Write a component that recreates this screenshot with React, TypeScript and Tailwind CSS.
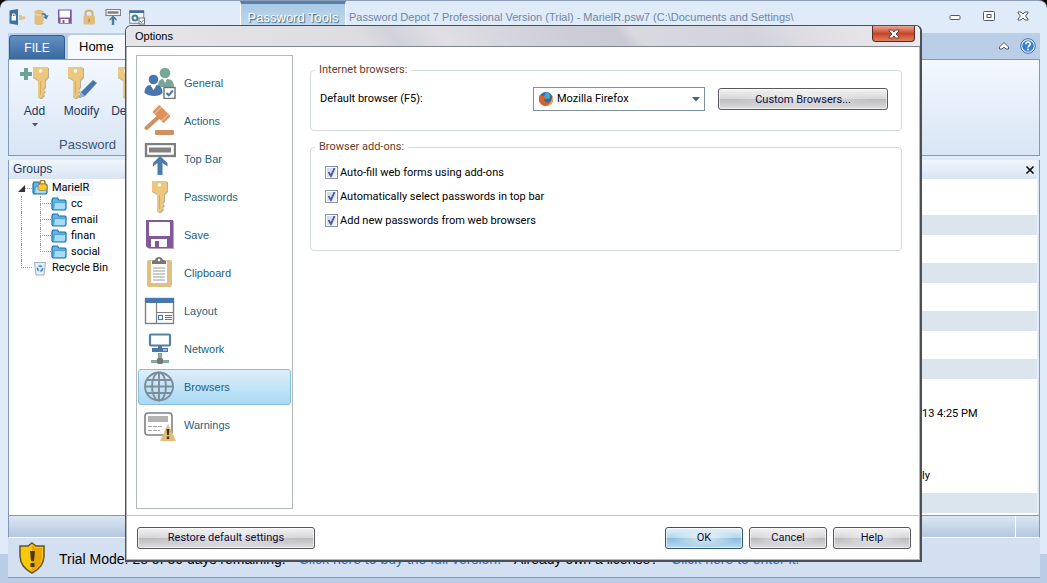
import { useState, type ReactNode } from "react";
import clsx from "clsx";

const LINE = "#808080";

function KeyShape() {
  return (
    <>
      <path d="M9 1h15v10l-3 3v7l-2 2 2 2-2 2 1 2-3 3h-2l-2-2V14l-5-3z" fill="#b9ae93" />
      <path d="M8 0h15v10l-3 3v7l-2 2 2 2-2 2 1 2-3 3h-1l-2-2V13l-5-3V0z" fill="#edc77e" />
      <circle cx="15.5" cy="4" r="1.8" fill="#fff" />
      <path d="M15.5 14v14" stroke="#d3aa60" />
    </>
  );
}

function GeneralIcon() {
  return (
    <>
      <circle cx="21" cy="6" r="5.3" fill="#79a797" />
      <path d="M14 20c0-6 2-8 5-8l2 4 2-4c5 0 7 3 7 8z" fill="#79a797" />
      <circle cx="9.5" cy="12.5" r="4.8" fill="#4977ad" />
      <path d="M0.5 26c0-5 2-8 6-8l3 5 3-5c4 0 6 3 6 8-3 4-13 4-18 0z" fill="#4977ad" />
      <path d="M7 18h5l-2.5 5z" fill="#fff" />
      <rect x="20" y="20.5" width="11" height="11" fill="#fff" stroke="#707070" strokeWidth="1.4" />
      <path d="M22.5 26l2.3 2.3 4-4.8" fill="none" stroke="#4977ad" strokeWidth="2" />
    </>
  );
}

function ActionsIcon() {
  return (
    <>
      <path d="M2.5 23L14 12.5" stroke="#cf8f60" strokeWidth="4" strokeLinecap="round" />
      <g transform="rotate(45 17.5 9)">
        <rect x="9.5" y="4" width="16" height="10" rx="1" fill="#de935a" />
        <path d="M12.5 4v10M22.5 4v10" stroke="#f3c49d" />
      </g>
      <rect x="11" y="25" width="19" height="5" rx="1" fill="#cf8f60" />
    </>
  );
}

function TopBarIcon() {
  return (
    <>
      <rect x="2" y="1" width="29" height="12" fill="#fff" stroke={LINE} strokeWidth="2.4" />
      <rect x="5" y="4.5" width="22" height="5" fill={LINE} />
      <path d="M16 13l7.5 7v3.5L18.5 20v12h-5V20L9 23.5V20z" fill="#4c7cae" />
    </>
  );
}

function DiskIcon() {
  return (
    <>
      <path d="M3 2h27v28H5l-2-3z" fill="#b6a3bf" />
      <path d="M2 1h27v28H4l-2-2z" fill="#81589b" />
      <rect x="5" y="3" width="21" height="14" fill="#fff" />
      <rect x="7" y="20" width="16" height="8" fill="#fff" />
      <rect x="11" y="22" width="4" height="6" fill="#81589b" />
    </>
  );
}

function ClipboardIcon() {
  return (
    <>
      <rect x="3" y="3" width="25" height="27" rx="2" fill="#dfc084" />
      <rect x="7" y="4" width="16" height="22" fill="#fff" />
      <path d="M8 7V4l3-1c1-4 7-4 8 0l3 1v3z" fill="#777" />
      <circle cx="15" cy="3" r="1.3" fill="#fff" />
      <path d="M9 11h12M9 14h12M9 17h12M9 20h12M9 23h12" stroke="#999" />
    </>
  );
}

function LayoutIcon() {
  return (
    <>
      <rect x="1.5" y="3.5" width="28" height="25" fill="#fff" stroke={LINE} strokeWidth="1.4" />
      <rect x="1" y="3" width="29" height="5" fill="#4977ad" />
      <path d="M12.5 8v20M12.5 17.5h17" stroke={LINE} strokeWidth="1.2" />
      <rect x="14.5" y="20.5" width="4" height="4" fill="none" stroke="#4977ad" strokeWidth="1.2" />
      <path d="M21 20.5h7M21 22.5h7M21 24.5h7" stroke="#4977ad" />
    </>
  );
}

function NetworkIcon() {
  return (
    <>
      <rect x="6" y="1.5" width="20" height="11" rx="1" fill="#fff" stroke="#56829f" strokeWidth="2.2" />
      <path d="M14 13h4v3h-4zM8 15h16v4H8z" fill="#4c76a5" />
      <path d="M19 17h4" stroke="#fff" />
      <path d="M14 20h4v6h-4z" fill="#86ab9e" />
      <path d="M7 27h6v3H7zM19 27h6v3h-6z" fill="#86ab9e" />
      <path d="M13 26l1-1h4l1 1v4l-1 1h-4l-1-1z" fill="#777" />
    </>
  );
}

function GlobeIcon() {
  return (
    <g fill="none" stroke="#7e8d9b" strokeWidth="1.9">
      <circle cx="15" cy="15.5" r="14" />
      <ellipse cx="15" cy="15.5" rx="7" ry="14" />
      <path d="M15 1.5v28M1 15.5h28M3 9h24M3 22h24" />
    </g>
  );
}

function WarningsIcon() {
  return (
    <>
      <rect x="1" y="4" width="27" height="22" rx="3" fill="#fff" stroke={LINE} strokeWidth="1.6" />
      <rect x="4" y="7" width="20" height="6" fill="#b3b3b3" />
      <path d="M4 17.5h14M4 21.5h12" stroke="#a5a5a5" strokeDasharray="4 1" />
      <path d="M24 15l8 17H16z" fill="#e2bd79" />
      <path d="M22.5 20h3l-.6 6h-1.8zM22.8 27.5h2.4V30h-2.4z" fill="#44351f" />
    </>
  );
}

function Icon({ size, children }: { size: "sm" | "lg"; children: ReactNode }) {
  return (
    <svg
      viewBox="0 0 32 32"
      className={clsx("shrink-0", size === "sm" ? "h-4 w-4" : "h-8 w-8")}
      aria-hidden="true"
    >
      {children}
    </svg>
  );
}

const SECTIONS = [
  { name: "General", icon: <GeneralIcon /> },
  { name: "Actions", icon: <ActionsIcon /> },
  { name: "Top Bar", icon: <TopBarIcon /> },
  { name: "Passwords", icon: <KeyShape /> },
  { name: "Save", icon: <DiskIcon /> },
  { name: "Clipboard", icon: <ClipboardIcon /> },
  { name: "Layout", icon: <LayoutIcon /> },
  { name: "Network", icon: <NetworkIcon /> },
  { name: "Browsers", icon: <GlobeIcon /> },
  { name: "Warnings", icon: <WarningsIcon /> },
];

const ADDONS = [
  { id: "autofill", label: "Auto-fill web forms using add-ons" },
  { id: "autoselect", label: "Automatically select passwords in top bar" },
  { id: "addnew", label: "Add new passwords from web browsers" },
];

const QUICK_ACTIONS = [
  {
    name: "Lock database",
    icon: (
      <>
        <path d="M1 3l17-3v32L1 29z" fill="#3d6f9f" />
        <path d="M5 14h9v9H5z" fill="#fff" />
        <path d="M7 14v-4h5v4" fill="none" stroke="#fff" strokeWidth="2" />
        <path d="M20 12h6v3h6v5h-3v2h-2v-2h-1v2h-6z" fill="#e5c48a" />
      </>
    ),
  },
  {
    name: "Open database",
    icon: (
      <>
        <path d="M3 5c4-5 14-5 18 0v24c-5 4-14 4-18 0z" fill="#e0bd80" />
        <path d="M3 10c4 3 14 3 18 0" fill="none" stroke="#f5e2b8" strokeWidth="2" />
        <path d="M17 9c5-3 9 0 10 4l4-1-4 9-7-5 4-1c-1-3-4-4-7-3z" fill="#4977ad" />
      </>
    ),
  },
  { name: "Save", icon: <DiskIcon /> },
  {
    name: "Lock",
    icon: (
      <>
        <path d="M9 15V8c0-7 14-7 14 0v7" fill="none" stroke="#d3b078" strokeWidth="4" />
        <rect x="5" y="13" width="23" height="18" rx="3" fill="#e3bd7c" />
        <path d="M15 19h3v7h-3z" fill="#b88d49" />
      </>
    ),
  },
  { name: "Top bar", icon: <TopBarIcon /> },
  {
    name: "Options",
    icon: (
      <>
        <rect x="1.5" y="3.5" width="28" height="25" fill="#fff" stroke={LINE} strokeWidth="2" />
        <rect x="1" y="3" width="29" height="5" fill="#3d6f9f" />
        <circle cx="12" cy="18" r="5" fill="none" stroke="#3d7fa3" strokeWidth="4" />
        <rect x="20" y="18" width="11" height="12" fill="#fff" stroke="#707070" strokeWidth="2" />
        <path d="M22 24l3 3 4-5" fill="none" stroke="#4977ad" strokeWidth="2" />
      </>
    ),
  },
];

const RIBBON_ACTIONS = [
  {
    name: "Add",
    menu: true,
    icon: (
      <>
        <g transform="translate(6 0)">
          <KeyShape />
        </g>
        <path d="M5 1h4v4h4v4H9v4H5V9H1V5h4z" fill="#6da394" />
      </>
    ),
  },
  {
    name: "Modify",
    menu: false,
    icon: (
      <>
        <g transform="translate(-6 0)">
          <KeyShape />
        </g>
        <path d="M27 13l4 3-12 13-6 2 2-6z" fill="#4977ad" />
        <path d="M15 25l4 4-6 2z" fill="#8db0d6" />
      </>
    ),
  },
  {
    name: "Delete",
    menu: false,
    icon: (
      <g transform="translate(-3 0)">
        <KeyShape />
      </g>
    ),
  },
];

const FOLDERS = ["cc", "email", "finan", "social"];

function FolderShape() {
  return (
    <>
      <path
        d="M2 8l2-4h9l3 4h12l2 2v15l-2 3H4l-2-3z"
        fill="#5eb4e6"
        stroke="#1d6ea8"
        strokeWidth="2.4"
      />
      <path d="M7 13h22v12l-3 2H5z" fill="#a5dcf8" stroke="#3c92cc" strokeWidth="1.5" />
    </>
  );
}

function TitleBar() {
  return (
    <header className="flex h-8 items-start justify-between font-['Liberation_Sans',sans-serif]">
      <div className="flex min-w-0 flex-1">
        <div className="flex w-[232px] shrink-0 items-start gap-2 pt-2 pl-px">
          {QUICK_ACTIONS.map((action) => (
            <button key={action.name} type="button" aria-label={action.name}>
              <Icon size="sm">{action.icon}</Icon>
            </button>
          ))}
        </div>
        <div className="h-8 w-[106px] shrink-0 border-x border-t-3 border-x-white border-t-[#5580ad] bg-linear-to-b from-[#a9c8e6] to-[#c9dff2] pt-1 text-center text-[13px] leading-5 text-white [text-shadow:1px_1px_1px_#3c6273]">
          Password Tools
        </div>
        <h1 className="truncate pt-1.5 pl-[3px] text-[11px] leading-5 text-[#7086a6]">
          Password Depot 7 Professional Version (Trial) - MarielR.psw7 (C:\Documents and Settings\
        </h1>
      </div>
      <div className="flex items-center gap-5 pt-2 pr-2.5">
        <button type="button" aria-label="Minimize">
          <svg viewBox="0 0 14 14" className="h-3.5 w-3.5">
            <rect x="2" y="6.5" width="10" height="4" rx="1" fill="#fff" stroke="#515a69" />
          </svg>
        </button>
        <button type="button" aria-label="Maximize">
          <svg viewBox="0 0 14 14" className="h-3.5 w-3.5">
            <rect x="1.5" y="2.5" width="11" height="9" rx="1" fill="#fff" stroke="#515a69" />
            <rect x="5" y="5.5" width="4" height="3" fill="#fff" stroke="#515a69" />
          </svg>
        </button>
        <button type="button" aria-label="Close window">
          <svg viewBox="0 0 14 14" className="h-3.5 w-3.5">
            <path
              d="M2 3h3l2 2 2-2h3v1L9.5 7l2.5 3v1H9L7 9l-2 2H2v-1l2.5-3L2 4z"
              fill="#fff"
              stroke="#515a69"
            />
          </svg>
        </button>
      </div>
    </header>
  );
}

function Ribbon() {
  return (
    <>
      <div className="flex h-[26px] items-end justify-between bg-[#bbcee7] font-['Liberation_Sans',sans-serif]">
        <div className="flex items-end gap-[3px] pl-px">
          <button
            type="button"
            className="h-6 w-14 rounded-t border border-b-0 border-[#335d92] bg-linear-to-b from-[#6490c2] to-[#39699f] text-xs text-white"
          >
            FILE
          </button>
          <button
            type="button"
            className="h-6 w-[60px] rounded-t bg-[#f6faff] px-[11px] text-left text-[13px] text-black"
          >
            Home
          </button>
        </div>
        <div className="flex h-full items-center gap-2.5 pr-1">
          <button type="button" aria-label="Collapse ribbon">
            <svg viewBox="0 0 12 12" className="h-3 w-3">
              <path d="M1.5 7L6 2.5 10.5 7v2H8L6 7.2 4 9H1.5z" fill="#fff" stroke="#515a69" />
            </svg>
          </button>
          <button type="button" aria-label="Ribbon help">
            <svg viewBox="0 0 16 16" className="h-4 w-4">
              <circle cx="8" cy="8" r="7.3" fill="#e3effb" stroke="#3a6fb4" />
              <circle cx="8" cy="8" r="5.8" fill="#3f80cc" />
              <path
                d="M5.8 6.2c.2-3 4.6-2.7 4.4 0 0 1.3-2.2 1.5-2.2 3.2"
                fill="none"
                stroke="#fff"
                strokeWidth="1.5"
              />
              <circle cx="8" cy="11.6" r="1" fill="#fff" />
            </svg>
          </button>
        </div>
      </div>
      <div className="flex h-[97px] flex-col justify-between border border-[#829ab9] bg-linear-to-b from-[#f3f8ff] to-[#d8e5f4] pl-0.5 font-['Liberation_Sans',sans-serif] text-[#23375c]">
        <div className="flex pt-[7px]">
          {RIBBON_ACTIONS.map((action) => (
            <button
              key={action.name}
              type="button"
              className="flex w-[47px] flex-col items-center text-xs"
            >
              <Icon size="lg">{action.icon}</Icon>
              <span className="leading-6">{action.name}</span>
              {action.menu && (
                <svg viewBox="0 0 6 4" className="h-1 w-1.5">
                  <path d="M0 0h6L3 3.5z" fill="#4c5563" />
                </svg>
              )}
            </button>
          ))}
        </div>
        <div className="pl-12 text-[13px] leading-5 text-[#3d5379]">Password</div>
      </div>
    </>
  );
}

function GroupTree() {
  return (
    <aside className="flex w-[120px] flex-col bg-white">
      <h2 className="h-[19px] bg-linear-to-b from-[#f0f5fc] to-[#d9e5f3] pl-1 font-['Liberation_Sans',sans-serif] text-xs leading-[19px] text-[#27395a]">
        Groups
      </h2>
      <ul className="pt-px text-[11px] leading-4 text-black">
        <li className="flex h-4 items-center pl-[9px]">
          <svg viewBox="0 0 7 7" className="h-[7px] w-[7px]">
            <path d="M7 0v7H0z" fill="#333" />
          </svg>
          <span className="w-[7px] border-t border-dotted border-[#999]" />
          <Icon size="sm">
            <FolderShape />
            <path d="M16 9V5c0-6 10-6 10 0v4" fill="none" stroke="#a97c12" strokeWidth="3" />
            <rect x="12" y="8" width="18" height="13" rx="5" fill="#f4c63a" stroke="#a97c12" strokeWidth="1.5" />
          </Icon>
          <span className="ml-1 bg-[#f4f6fa] pr-1">MarielR</span>
        </li>
        {FOLDERS.map((folder, i) => (
          <li key={folder} className="flex h-4 items-center pl-3">
            <span className="h-4 w-[19px] border-l border-dotted border-[#999]" />
            <span className="flex w-[11px] flex-col">
              <span className="h-2 border-b border-l border-dotted border-[#999]" />
              <span
                className={clsx(
                  "h-2 border-dotted border-[#999]",
                  i < FOLDERS.length - 1 && "border-l"
                )}
              />
            </span>
            <Icon size="sm">
              <FolderShape />
            </Icon>
            <span className="ml-1">{folder}</span>
          </li>
        ))}
        <li className="flex h-4 items-start pl-3">
          <span className="h-2 w-[11px] border-b border-l border-dotted border-[#999]" />
          <Icon size="sm">
            <path d="M5 5h22l-3 25H8z" fill="#e6eef6" stroke="#9eb0c3" strokeWidth="2" />
            <circle cx="16" cy="17" r="5" fill="none" stroke="#3484c9" strokeWidth="3" strokeDasharray="7 3" />
          </Icon>
          <span className="ml-1">Recycle Bin</span>
        </li>
      </ul>
    </aside>
  );
}

function DetailsPanel() {
  return (
    <aside className="mr-px flex w-[118px] flex-col border-r border-[#e9f0f8] bg-white text-[11px] text-black">
      <div className="flex h-[19px] items-center justify-end bg-linear-to-b from-[#f0f5fc] to-[#d9e5f3] pr-0.5">
        <button type="button" aria-label="Close details">
          <svg viewBox="0 0 10 10" className="h-2.5 w-2.5">
            <path d="M1.5 1.5l7 7M8.5 1.5l-7 7" stroke="#000" strokeWidth="1.5" />
          </svg>
        </button>
      </div>
      <div className="h-9" />
      <div className="h-5 bg-[#dbe5ee]" />
      <div className="h-7" />
      <div className="h-5 bg-[#dbe5ee]" />
      <div className="h-7" />
      <div className="h-5 bg-[#dbe5ee]" />
      <div className="h-7" />
      <div className="h-5 bg-[#dbe5ee]" />
      <div className="flex flex-1 flex-col gap-11 pt-[26px] pl-0.5 leading-[18px]">
        <p>13 4:25 PM</p>
        <p>ly</p>
      </div>
      <div className="mb-0.5 h-5 bg-[#dbe5ee]" />
    </aside>
  );
}

function TrialNotice() {
  return (
    <footer className="flex h-10 items-center gap-[13px] border-b border-[#7f97b9] bg-[#d3e0f2] pl-2.5 font-['Liberation_Sans',sans-serif] text-sm text-black">
      <svg viewBox="0 0 28 32" className="h-8 w-7 shrink-0">
        <path
          d="M14 1l4 3h8v10c0 9-6 14-12 17C8 28 2 23 2 14V4h8z"
          fill="#f7c906"
          stroke="#63522a"
          strokeWidth="1.5"
        />
        <path d="M14 3l3 3h7v8c0 7-4 12-10 15z" fill="#e9a70a" />
        <path d="M12 9h5l-1 10h-3zM12.5 21h4v4h-4z" fill="#4b3310" />
      </svg>
      <div className="flex gap-[13px] pt-0.5 whitespace-nowrap">
        <span>Trial Mode: 28 of 30 days remaining.</span>
        <a href="#buy" className="text-[#2f6fb0]">
          Click here to buy the full version.
        </a>
        <span>Already own a license?</span>
        <a href="#enter" className="text-[#2f6fb0]">
          Click here to enter it.
        </a>
      </div>
    </footer>
  );
}

function DialogButton({
  primary,
  className,
  children,
}: {
  primary?: boolean;
  className?: string;
  children: ReactNode;
}) {
  return (
    <button
      type="button"
      className={clsx(
        "h-[22px] rounded-[3px] border pt-0.5 text-[11px] text-[#0c0c3c] inset-ring inset-ring-white/60",
        primary
          ? "border-[#2f566e] bg-[radial-gradient(ellipse_at_center,#ffffffb0,#ffffff00_60%),linear-gradient(#e6f3fb,#b5d6ec_48%,#8dbbdc_52%,#b9dcf2)]"
          : "border-[#58585c] bg-[radial-gradient(ellipse_at_center,#ffffff90,#ffffff00_60%),linear-gradient(#f4f4f5,#d6d6d8_48%,#bcbcbf_52%,#dededf)]",
        className
      )}
    >
      {children}
    </button>
  );
}

function BrowserSettings() {
  const [browser, setBrowser] = useState("Mozilla Firefox");
  const [enabled, setEnabled] = useState<Record<string, boolean>>({
    autofill: true,
    autoselect: true,
    addnew: true,
  });

  return (
    <div className="flex min-w-0 flex-1 flex-col gap-[9px] pt-2">
      <fieldset className="h-[68px] rounded border border-[#d5dcdc] pr-[13px] pl-1">
        <legend className="px-1 leading-[14px] text-[#6b3a28]">Internet browsers:</legend>
        <div className="flex items-start gap-[13px] pt-2.5 pl-[5px]">
          <label htmlFor="browser" className="flex-1 leading-6">
            Default browser (F5):
          </label>
          <div className="flex h-6 w-[172px] items-center border border-[#7d929c] bg-white px-1">
            <Icon size="sm">
              <circle cx="16" cy="16" r="14" fill="#2d6da8" />
              <path d="M15 3c7-1 11 5 9 10-2 3-8 3-8 3l-4-5z" fill="#49a5ce" />
              <path
                d="M4 7c-5 11 1 23 12 23 12 0 18-13 12-21 1 8-2 13-8 14-5 0-8-3-8-6l4-1 2-3-5-1-2-4-3 2z"
                fill="#d9622b"
              />
              <path d="M28 9c6 9-1 21-12 21 8-3 13-10 12-21z" fill="#f4b23c" />
            </Icon>
            <select
              id="browser"
              value={browser}
              onChange={(e) => setBrowser(e.target.value)}
              className="min-w-0 flex-1 appearance-none pl-[3px] text-[11px] text-black outline-none"
            >
              <option>Mozilla Firefox</option>
              <option>Internet Explorer</option>
              <option>Google Chrome</option>
            </select>
            <svg viewBox="0 0 8 5" className="h-[5px] w-2 shrink-0">
              <path d="M0 0h8L4 4.5z" fill="#4b606c" />
            </svg>
          </div>
          <DialogButton className="mt-px w-[170px]">Custom Browsers...</DialogButton>
        </div>
      </fieldset>

      <fieldset className="h-[111px] rounded border border-[#d5dcdc] pl-1">
        <legend className="px-1 leading-[14px] text-[#6b3a28]">Browser add-ons:</legend>
        <div className="pt-1.5 pl-2.5">
          {ADDONS.map((addon) => (
            <label key={addon.id} className="flex h-6 items-center gap-0.5">
              <span className="grid">
                <input
                  type="checkbox"
                  checked={enabled[addon.id]}
                  onChange={(e) =>
                    setEnabled((prev) => ({ ...prev, [addon.id]: e.target.checked }))
                  }
                  className="col-start-1 row-start-1 h-[13px] w-[13px] appearance-none border border-[#8591a5] bg-linear-to-br from-[#cdd4e2] to-[#f2f4f9] inset-ring inset-ring-white"
                />
                {enabled[addon.id] && (
                  <svg
                    viewBox="0 0 13 13"
                    className="pointer-events-none col-start-1 row-start-1 h-[13px] w-[13px]"
                  >
                    <path d="M3.5 6l2.5 4 3.5-8" fill="none" stroke="#4a5490" strokeWidth="1.8" />
                  </svg>
                )}
              </span>
              <span className="pt-0.5">{addon.label}</span>
            </label>
          ))}
        </div>
      </fieldset>
    </div>
  );
}

function OptionsDialog() {
  const [section, setSection] = useState("Browsers");

  return (
    <section
      role="dialog"
      aria-label="Options"
      className="flex w-full flex-col rounded-t-md border border-r-2 border-b-2 border-[#4b4f58] bg-white text-[11px] text-black"
    >
      <header className="flex h-[21px] items-start justify-between rounded-t-md border-b border-[#7e858c] bg-[linear-gradient(50deg,#e6e6ea_0%,#dcdce1_30%,#d2d3da_34%,#dfdfe4_40%,#cccdd6_56%,#c9cad4_62%,#d9dae0_64%,#d2d3db_78%,#dcdce2_84%,#ececef_100%)] pr-[5px] pl-[9px] font-['Liberation_Sans',sans-serif]">
        <h2 className="leading-5">Options</h2>
        <button
          type="button"
          aria-label="Close"
          className="flex h-4 w-[43px] items-center justify-center rounded-b border border-t-0 border-[#5b2a24] bg-linear-to-b from-[#e6a594] via-[#c8432a] via-50% to-[#e07f5c]"
        >
          <svg viewBox="0 0 14 12" className="h-3 w-3.5">
            <path
              d="M2 2h3.5L7 4l1.5-2H12v1L9 6l3 3v1H8.5L7 8l-1.5 2H2V9l3-3-3-3z"
              fill="#fff"
              stroke="#6f3a36"
            />
          </svg>
        </button>
      </header>

      <div className="flex flex-1 flex-col border-r border-b border-l border-[#b4b8b8]">
        <div className="flex flex-1 gap-[17px] pt-2 pr-[17px] pb-1.5 pl-[9px]">
          <nav className="flex w-[157px] shrink-0 flex-col gap-0.5 border border-[#b0b8ba] px-px pt-[9px] font-['Liberation_Sans',sans-serif]">
            {SECTIONS.map(({ name, icon }) => (
              <button
                key={name}
                type="button"
                onClick={() => setSection(name)}
                className={clsx(
                  "flex h-9 items-center gap-2 rounded-[3px] border pl-[5px] text-left text-[#1f5f7d]",
                  section === name
                    ? "border-[#86bed8] bg-linear-to-b from-[#dceffa] to-[#a9d9f3]"
                    : "border-transparent"
                )}
              >
                <Icon size="lg">{icon}</Icon>
                {name}
              </button>
            ))}
          </nav>
          <BrowserSettings />
        </div>

        <footer className="flex h-11 items-center gap-1.5 border-t border-[#bcc6c4] pr-2 pl-2.5">
          <DialogButton className="mr-auto w-[178px]">Restore default settings</DialogButton>
          <DialogButton primary className="w-[78px]">
            OK
          </DialogButton>
          <DialogButton className="w-[78px]">Cancel</DialogButton>
          <DialogButton className="w-[78px]">Help</DialogButton>
        </footer>
      </div>
    </section>
  );
}

export default function App() {
  return (
    <div className="relative min-h-screen bg-black font-[Roboto,'Liberation_Sans',sans-serif]">
      <div className="flex min-h-screen flex-col rounded-t-lg border-t border-[#8c9db5] bg-[linear-gradient(#dfebf8,#dfebf8_calc(100%-29px),#bbcde6_calc(100%-29px))] pr-[7px] pb-[5px] pl-2">
        <TitleBar />
        <Ribbon />
        <main className="mt-1 flex flex-1 justify-between border-x border-[#829ab9] bg-[#dfe9f5]">
          <GroupTree />
          <DetailsPanel />
        </main>
        <div className="flex h-[23px] shrink-0 justify-end border border-b-white border-[#829ab9] bg-linear-to-b from-[#dbe6f3] to-[#b5c7df]">
          <span className="w-6 border-l border-white" />
        </div>
        <TrialNotice />
      </div>

      <div className="absolute inset-0 flex px-[125px] pt-[25px] pb-[21px]">
        <OptionsDialog />
      </div>
    </div>
  );
}
